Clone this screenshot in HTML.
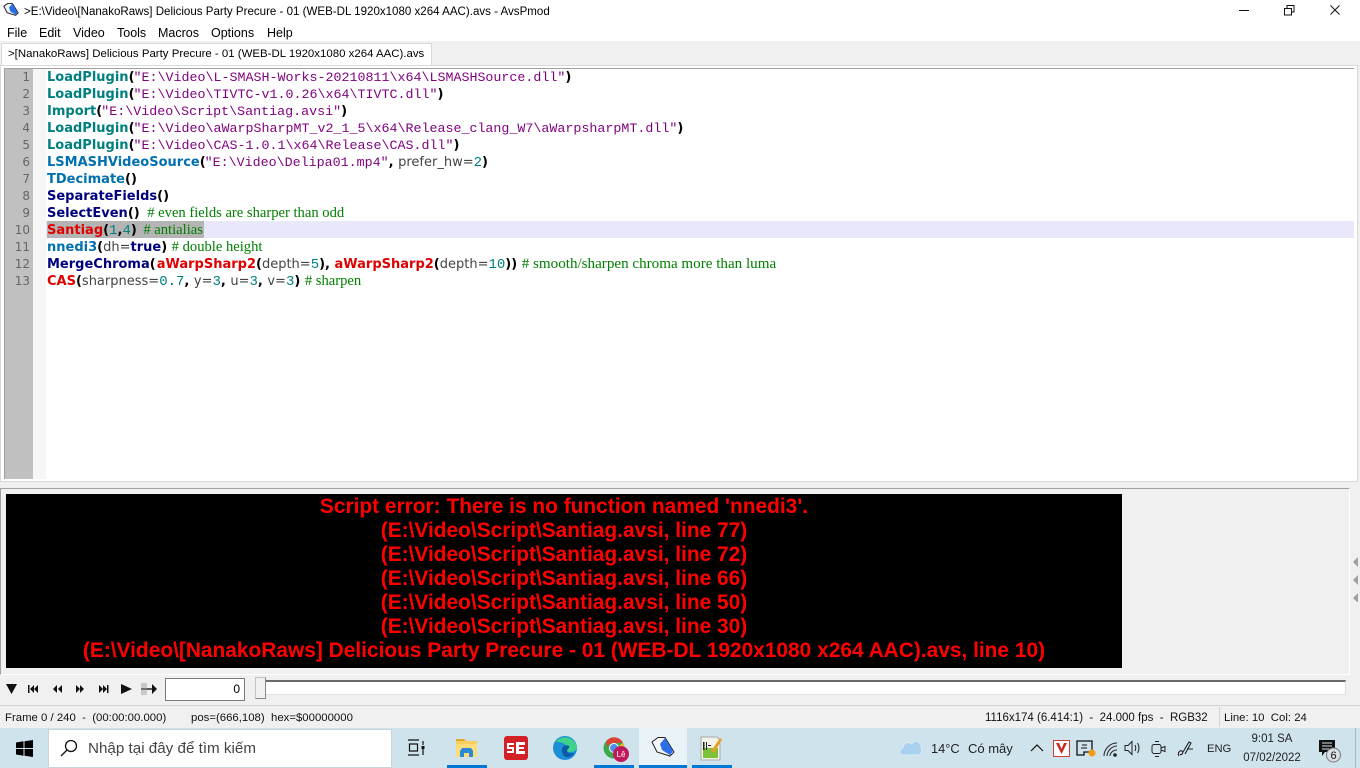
<!DOCTYPE html>
<html><head><meta charset="utf-8"><style>
*{box-sizing:border-box}
html,body{margin:0;padding:0;width:1360px;height:768px;overflow:hidden;background:#f0f0f0;font-family:"Liberation Sans","Noto Sans CJK SC",sans-serif;font-size:12px;color:#000}
.a{position:absolute;white-space:pre}
.l{position:absolute;left:47px;height:17px;line-height:17px;white-space:pre;font-size:13px;margin-top:-1px}
.n{position:absolute;left:5px;width:25px;text-align:right;font:12px/17px "DejaVu Sans",sans-serif;color:#666}
.f{font:bold 13px/17px "DejaVu Sans",sans-serif}
.s{font:13.33px/17px "Liberation Mono",monospace;color:#7f007f;margin-left:-1px}
.p{font:bold 13px/17px "DejaVu Sans",sans-serif;color:#000}
.i{font:13px/17px "DejaVu Sans",sans-serif;color:#444}
.d{font:14px/17px "Liberation Mono",monospace;color:#007f7f}
.c{font:14.6px/17px "Liberation Serif",serif;color:#007f00}
.t{color:#007f7f}.b{color:#0070b0}.v{color:#00007f}.r{color:#e00000}
.e{position:absolute;left:6px;width:1116px;text-align:center;color:#f00;font:bold 20.9px/24px "Liberation Sans",sans-serif;white-space:pre}
.m{position:absolute;top:26px;font-size:12.5px;line-height:14px}
.st{position:absolute;top:711px;font-size:11.38px;line-height:14px;white-space:pre;color:#111}
.u{position:absolute;top:765px;height:3px;background:#0078d4}
</style></head><body>
<div class="a" style="left:0;top:0;width:1360px;height:22px;background:#fff"></div>
<svg class="a" style="left:3px;top:3px" width="16" height="13" viewBox="0 0 24 20"><path d="M1 5L7 .5H14L23 15 19 19 6 15Z" fill="#f0f3f6" stroke="#222" stroke-width="1.500"/><path d="M9 7L14 1 22 14 19 18 11 13Z" fill="#2a6fe8"/></svg>
<div class="a" style="left:24px;top:5px;font-size:11.56px;line-height:14px">&gt;E:\Video\[NanakoRaws] Delicious Party Precure - 01 (WEB-DL 1920x1080 x264 AAC).avs - AvsPmod</div>
<svg class="a" style="left:1230px;top:0" width="130" height="22" viewBox="0 0 130 22"><path d="M9 10.5H19" stroke="#111"/><path d="M54.500 8.500h7v6.500h-7zM57 8V5.500h7V12h-2.500" fill="none" stroke="#111"/><path d="M100.500 5.500l9 9M109.500 5.500l-9 9" stroke="#111"/></svg>

<div class="a" style="left:0;top:22px;width:1360px;height:19px;background:#fff"></div>
<div class="m" style="left:7px">File</div><div class="m" style="left:39px">Edit</div><div class="m" style="left:73px">Video</div><div class="m" style="left:117px">Tools</div><div class="m" style="left:158px">Macros</div><div class="m" style="left:211px">Options</div><div class="m" style="left:267px">Help</div>

<div class="a" style="left:0;top:41px;width:1360px;height:27px;background:#f0f0f0"></div>
<div class="a" style="left:1px;top:43px;width:431px;height:23px;background:#fff;border:1px solid #d9d9d9;border-bottom:0"></div>
<div class="a" style="left:8px;top:47px;font-size:11.44px;line-height:14px">&gt;[NanakoRaws] Delicious Party Precure - 01 (WEB-DL 1920x1080 x264 AAC).avs</div>

<div class="a" style="left:0;top:65px;width:1358px;height:417px;background:#fff;border:1px solid #d9d9d9"></div>
<div class="a" style="left:4px;top:68px;width:1350px;height:1px;background:#a0a0a0"></div>
<div class="a" style="left:4px;top:68px;width:1px;height:411px;background:#a0a0a0"></div>
<div class="a" style="left:5px;top:69px;width:28px;height:410px;background:#c0c0c0"></div>
<div class="a" style="left:33px;top:69px;width:13px;height:410px;background:#f6f6f6"></div>
<div class="a" style="left:46px;top:221px;width:1308px;height:17px;background:#e8e8fa"></div>
<div class="a" style="left:47px;top:221px;width:157px;height:17px;background:#b4b4b4"></div>

<div class="n" style="top:69px">1</div><div class="n" style="top:86px">2</div><div class="n" style="top:103px">3</div><div class="n" style="top:120px">4</div><div class="n" style="top:137px">5</div><div class="n" style="top:154px">6</div><div class="n" style="top:171px">7</div><div class="n" style="top:188px">8</div><div class="n" style="top:205px">9</div><div class="n" style="top:222px">10</div><div class="n" style="top:239px">11</div><div class="n" style="top:256px">12</div><div class="n" style="top:273px">13</div>

<div class="l" style="top:69px"><span class="f t">LoadPlugin</span><span class="p">(</span><span class="s">"E:\Video\L-SMASH-Works-20210811\x64\LSMASHSource.dll"</span><span class="p">)</span></div>
<div class="l" style="top:86px"><span class="f t">LoadPlugin</span><span class="p">(</span><span class="s">"E:\Video\TIVTC-v1.0.26\x64\TIVTC.dll"</span><span class="p">)</span></div>
<div class="l" style="top:103px"><span class="f t">Import</span><span class="p">(</span><span class="s">"E:\Video\Script\Santiag.avsi"</span><span class="p">)</span></div>
<div class="l" style="top:120px"><span class="f t">LoadPlugin</span><span class="p">(</span><span class="s">"E:\Video\aWarpSharpMT_v2_1_5\x64\Release_clang_W7\aWarpsharpMT.dll"</span><span class="p">)</span></div>
<div class="l" style="top:137px"><span class="f t">LoadPlugin</span><span class="p">(</span><span class="s">"E:\Video\CAS-1.0.1\x64\Release\CAS.dll"</span><span class="p">)</span></div>
<div class="l" style="top:154px"><span class="f b">LSMASHVideoSource</span><span class="p">(</span><span class="s">"E:\Video\Delipa01.mp4"</span><span class="p">, </span><span class="i">prefer_hw=</span><span class="d">2</span><span class="p">)</span></div>
<div class="l" style="top:171px"><span class="f b">TDecimate</span><span class="p">()</span></div>
<div class="l" style="top:188px"><span class="f v">SeparateFields</span><span class="p">()</span></div>
<div class="l" style="top:205px"><span class="f v">SelectEven</span><span class="p">() </span><span class="c" style="margin-left:3px"># even fields are sharper than odd</span></div>
<div class="l" style="top:222px"><span class="f r">Santiag</span><span class="p">(</span><span class="d">1</span><span class="p">,</span><span class="d">4</span><span class="p">) </span><span class="c" style="margin-left:2px"># antialias</span></div>
<div class="l" style="top:239px"><span class="f b">nnedi3</span><span class="p">(</span><span class="i">dh=</span><span class="f v">true</span><span class="p">) </span><span class="c"># double height</span></div>
<div class="l" style="top:256px"><span class="f v">MergeChroma</span><span class="p">(</span><span class="f r" style="margin-left:1px">aWarpSharp2</span><span class="p">(</span><span class="i">depth=</span><span class="d">5</span><span class="p">), </span><span class="f r">aWarpSharp2</span><span class="p">(</span><span class="i">depth=</span><span class="d">10</span><span class="p">)) </span><span class="c" style="font-size:15.1px"># smooth/sharpen chroma more than luma</span></div>
<div class="l" style="top:273px"><span class="f r">CAS</span><span class="p">(</span><span class="i">sharpness=</span><span class="d">0.7</span><span class="p">, </span><span class="i">y=</span><span class="d">3</span><span class="p">, </span><span class="i">u=</span><span class="d">3</span><span class="p">, </span><span class="i">v=</span><span class="d">3</span><span class="p">) </span><span class="c"># sharpen</span></div>

<div class="a" style="left:0;top:488px;width:1350px;height:187px;background:#f0f0f0;border:1px solid #fff;border-top:1px solid #a0a0a0;border-left:1px solid #a0a0a0"></div>
<div class="a" style="left:6px;top:494px;width:1116px;height:174px;background:#000"></div>
<div class="e" style="top:495px">Script error: There is no function named 'nnedi3'.</div>
<div class="e" style="top:519px">(E:\Video\Script\Santiag.avsi, line 77)</div>
<div class="e" style="top:543px">(E:\Video\Script\Santiag.avsi, line 72)</div>
<div class="e" style="top:567px">(E:\Video\Script\Santiag.avsi, line 66)</div>
<div class="e" style="top:591px">(E:\Video\Script\Santiag.avsi, line 50)</div>
<div class="e" style="top:615px">(E:\Video\Script\Santiag.avsi, line 30)</div>
<div class="e" style="top:639px">(E:\Video\[NanakoRaws] Delicious Party Precure - 01 (WEB-DL 1920x1080 x264 AAC).avs, line 10)</div>
<svg class="a" style="left:1352px;top:556px" width="8" height="46" viewBox="0 0 8 46" fill="#a0a0a0"><path d="M1 6L6 1V11ZM1 24L6 19V29ZM1 42L6 37V47Z"/></svg>

<svg class="a" style="left:0;top:680px" width="165" height="18" viewBox="0 0 165 18" fill="#111"><path d="M6 4H17L11.500 14Z"/><path d="M28 5h1.500v8H28zM34 5v8l-4-4zM38 5v8l-4-4zM57 5v8l-4-4zM62 5v8l-4-4zM76 5l4 4-4 4zM80 5l4 4-4 4zM99 5l4 4-4 4zM103 5l4 4-4 4zM107 5h1.500v8H107zM121 4l11 5-11 5z"/><rect x="141" y="8" width="15" height="2" fill="#555"/><path d="M152 4l5 5-5 5z"/><rect x="141" y="3" width="6" height="12" fill="#999" opacity=".45"/></svg>
<div class="a" style="left:165px;top:678px;width:80px;height:23px;background:#fff;border:1px solid #7a7a7a;text-align:right;padding-right:4px;font-size:12px;line-height:21px">0</div>
<div class="a" style="left:255px;top:680px;width:1091px;height:15px;background:#fff;border:1px solid #e0e0e0;border-top:2px solid #6a6a6a"></div>
<div class="a" style="left:255px;top:677px;width:11px;height:22px;background:#f0f0f0;border:1px solid #c4c4c4;border-right:1px solid #888;border-bottom:1px solid #888"></div>

<div class="a" style="left:0;top:705px;width:1360px;height:1px;background:#d4d4d4"></div>
<div class="st" style="left:5px">Frame 0 / 240  -  (00:00:00.000)</div>
<div class="st" style="left:191px">pos=(666,108)  hex=$00000000</div>
<div class="st" style="left:985px;font-size:11.5px">1116x174 (6.414:1)  -  24.000 fps  -  RGB32</div>
<div class="a" style="left:1219px;top:707px;width:1px;height:20px;background:#d4d4d4"></div>
<div class="st" style="left:1224px">Line: 10  Col: 24</div>

<div class="a" style="left:0;top:728px;width:1360px;height:40px;background:#cfe3ed"></div>
<svg class="a" style="left:16px;top:740px" width="17" height="17" viewBox="0 0 17 17" fill="#000"><path d="M0 2.500L7.500 1.300V8H0ZM8.500 1.200L17 0V8H8.500ZM0 9H7.500V15.700L0 14.500ZM8.500 9H17V17L8.500 15.800Z"/></svg>
<div class="a" style="left:48px;top:729px;width:344px;height:39px;background:#fff;border:1px solid #c8d4da"></div>
<svg class="a" style="left:60px;top:739px" width="18" height="18" viewBox="0 0 18 18" fill="none" stroke="#111" stroke-width="1.300"><circle cx="11" cy="7" r="5.500"/><path d="M7 11L1 17"/></svg>
<div class="a" style="left:88px;top:740px;font-size:15.2px;line-height:18px;color:#444">Nhập tại đây để tìm kiếm</div>
<svg class="a" style="left:407px;top:739px" width="19" height="18" viewBox="0 0 19 18" fill="none" stroke="#111" stroke-width="1.200"><path d="M1 1h11M1 16h11M2.500 5h8v7h-8zM16 2v4M16 10v6"/><rect x="14.500" y="7" width="3" height="3" fill="#111" stroke="none"/></svg>

<svg class="a" style="left:455px;top:738px" width="23" height="20" viewBox="0 0 23 20"><path d="M1 1h8l2 2h11v15H1z" fill="#f8cf5f"/><path d="M1 1h8l2 2H1z" fill="#e5a928"/><path d="M1 6h21v13H1z" fill="#fbdd7c"/><path d="M5 19v-6l2-3h9l2 3v6h-4v-4h-5v4z" fill="#2b8ad8"/></svg>
<div class="u" style="left:447px;width:40px"></div>

<svg class="a" style="left:504px;top:736px" width="24" height="24" viewBox="0 0 24 24"><rect width="24" height="24" rx="3" fill="#d32027"/><path d="M3 7h7v2H5v2h5v6H3v-2h5v-2H3zM12 6h9v3h-6v2h5v2h-5v2h6v3h-9z" fill="#fff"/></svg>

<svg class="a" style="left:553px;top:736px" width="24" height="24" viewBox="0 0 24 24"><circle cx="12" cy="12" r="12" fill="#1a8fd6"/><path d="M3 6C7-1 21-1 24 11c0 3-3 5-7 5-3 0-4-2-3-3 1-5-8-8-11-7z" fill="#3fd28a"/><path d="M9 14c0-4 4-6 7-4 1 2-2 3-2 5 0 2 3 3 7 2-3 6-12 6-12-3z" fill="#0c5aa6"/></svg>

<svg class="a" style="left:603px;top:737px" width="26" height="25" viewBox="0 0 26 25"><circle cx="11" cy="11" r="10.500" fill="#3da94a"/><path d="M3 5C7-2 17-1 20 6H11C7 6 5 8 5 11z" fill="#dc4437"/><path d="M20 6c2 4 1 9-2 12l-5-7z" fill="#f5c022"/><circle cx="11" cy="11" r="4.500" fill="#4a8cf0" stroke="#fff"/><circle cx="18" cy="17" r="8" fill="#c2185b"/><text x="18" y="20" font-size="8" fill="#fff" text-anchor="middle" font-family="Liberation Sans">Lê</text></svg>
<div class="u" style="left:594px;width:40px"></div>

<div class="a" style="left:639px;top:728px;width:48px;height:40px;background:#e9f2f7"></div>
<svg class="a" style="left:651px;top:737px" width="24" height="20" viewBox="0 0 24 20"><path d="M1 5L7 .5H14L23 15 19 19 6 15Z" fill="#f3f5f6" stroke="#222"/><path d="M9 7L14 1 22 14 19 18 11 13Z" fill="#2a6fe8"/></svg>
<div class="u" style="left:639px;width:48px"></div>

<svg class="a" style="left:700px;top:735px" width="24" height="26" viewBox="0 0 24 26"><path d="M1 2h16l3 3v20H1z" fill="#f2f2e8" stroke="#aaa"/><path d="M3 13h15v10H3z" fill="#7cc33a"/><path d="M3 7h1.500v8H3zM6 7h1v8H6zM8 10h3v1H8z" fill="#222"/><path d="M11 16L20 3l2 1.500L14 18z" fill="#e8a020"/></svg>
<div class="u" style="left:692px;width:40px"></div>

<svg class="a" style="left:899px;top:738px" width="24" height="18" viewBox="0 0 24 18"><path d="M4 17C0 17 0 11 4 10 4 5 10 3 13 6c3-5 10-2 9 4 2 3 0 7-3 7z" fill="#a9d0ee" stroke="#d8ebf6"/></svg>
<div class="a" style="left:931px;top:742px;font-size:12.8px;line-height:14px;color:#222">14°C</div>
<div class="a" style="left:968px;top:742px;font-size:13px;line-height:14px;color:#222">Có mây</div>
<svg class="a" style="left:1030px;top:743px" width="14" height="9" viewBox="0 0 14 9" fill="none" stroke="#111" stroke-width="1.200"><path d="M1 8L7 2l6 6"/></svg>
<svg class="a" style="left:1053px;top:740px" width="17" height="17" viewBox="0 0 17 17"><rect x=".5" y=".5" width="16" height="16" fill="#fff" stroke="#d04030"/><path d="M3 3L8.500 14 14 3h-3L8.500 9 6 3z" fill="#c8281e"/></svg>
<svg class="a" style="left:1076px;top:740px" width="20" height="17" viewBox="0 0 20 17"><path d="M1 1h15v11H8v3H1z" fill="none" stroke="#111" stroke-width="1.300"/><path d="M6 5h5M5 8h6" stroke="#111"/><circle cx="16" cy="13" r="3.500" fill="#f39c12"/></svg>
<svg class="a" style="left:1103px;top:742px" width="15" height="15" viewBox="0 0 15 15" fill="none" stroke="#222"><path d="M1 14C1 7 7 1 14 1M4 14C4 9 9 4 14 4M7 14c0-3 3-6 7-6"/><circle cx="12" cy="13" r="1.300" fill="#222"/></svg>
<svg class="a" style="left:1124px;top:740px" width="18" height="16" viewBox="0 0 18 16" fill="none" stroke="#222"><path d="M1 5.500h3l4-4v13l-4-4H1zM11 5c1 2 1 4 0 6M13.500 3c2 3 2 7 0 10"/></svg>
<svg class="a" style="left:1151px;top:740px" width="16" height="18" viewBox="0 0 16 18" fill="none" stroke="#222"><rect x="1" y="4.500" width="9" height="9" rx="2"/><path d="M10 8l4-1.500v5L10 10M4 1.500h4M4 16.500h4"/></svg>
<svg class="a" style="left:1177px;top:740px" width="18" height="18" viewBox="0 0 18 18" fill="none" stroke="#222" stroke-width="1.100"><path d="M2 16c-2-3 1-6 3-5 2 2-1 5-2 3M6 12L12 2l2 1-6 11M10 9h6"/></svg>
<div class="a" style="left:1207px;top:742px;font-size:11.2px;line-height:14px;color:#222">ENG</div>
<div class="a" style="left:1237px;top:732px;width:70px;text-align:center;font-size:11.5px;line-height:14px;color:#222">9:01 SA</div>
<div class="a" style="left:1235px;top:751px;width:74px;text-align:center;font-size:11.5px;line-height:14px;color:#222">07/02/2022</div>
<svg class="a" style="left:1319px;top:740px" width="22" height="24" viewBox="0 0 22 24"><path d="M0 0h16v12H6l-3 4v-4H0z" fill="#111"/><path d="M3 3h10M3 6h10M3 9h7" stroke="#cfe3ed"/><circle cx="14.500" cy="15" r="7" fill="#d8dfe2" stroke="#777"/><text x="14.500" y="19" font-size="11" fill="#111" text-anchor="middle" font-family="Liberation Sans">6</text></svg>
<div class="a" style="left:1355px;top:728px;width:1px;height:40px;background:#a8bcc6"></div>
</body></html>
